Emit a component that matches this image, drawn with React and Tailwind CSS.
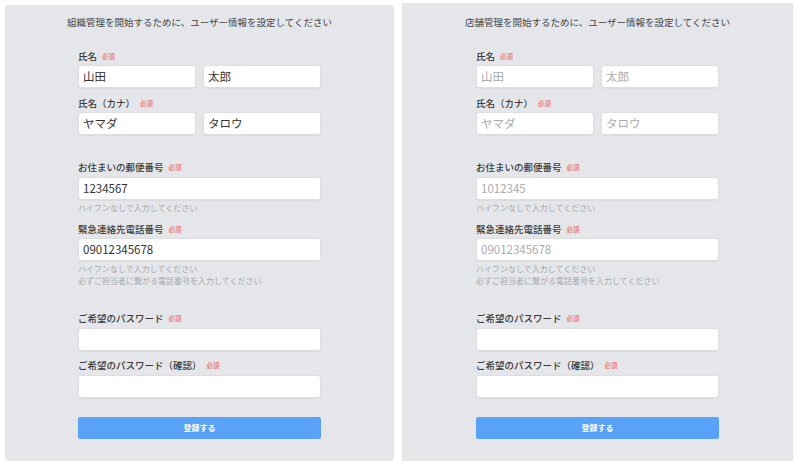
function Label({ text }) {
  return (
    <div className="flex h-[14px] items-center text-[9.5px] font-medium leading-[14px] text-[#3a3a3a]">
      <span>{text}</span>
      <span className="ml-[5px] text-[6.5px] font-bold text-[#ec8585]">必須</span>
    </div>
  );
}

function Field({ value, filled, className = "" }) {
  return (
    <div
      className={`flex h-[23px] items-center rounded-[3px] border border-[#dcdee2] bg-white px-[4px] text-[11.5px] shadow-[0_1px_1px_rgba(0,0,0,0.04)] ${
        filled ? "text-[#333]" : "text-[#a9abb0]"
      } ${className}`}
    >
      {value}
    </div>
  );
}

function Help({ lines }) {
  return (
    <div className="mt-[2px] text-[8px] leading-[12px] text-[#a8aaae]">
      {lines.map((l) => (
        <div key={l}>{l}</div>
      ))}
    </div>
  );
}

function Panel({ title, filled, data, className }) {
  return (
    <div className={`flex flex-col items-center bg-[#e4e6ea] ${className}`}>
      <div className="text-[9.5px] leading-[14px] text-[#444]">{title}</div>

      <div className="mt-[20px] w-[243px]">
        {/* 氏名 */}
        <Label text="氏名" />
        <div className="mt-[2px] grid grid-cols-2 gap-[7px]">
          <Field value={data.sei} filled={filled} />
          <Field value={data.mei} filled={filled} />
        </div>

        <div className="mt-[8px]">
          <Label text="氏名（カナ）" />
        </div>
        <div className="mt-[2px] grid grid-cols-2 gap-[7px]">
          <Field value={data.seiKana} filled={filled} />
          <Field value={data.meiKana} filled={filled} />
        </div>

        {/* 郵便番号 */}
        <div className="mt-[25px]">
          <Label text="お住まいの郵便番号" />
        </div>
        <Field value={data.zip} filled={filled} className="mt-[3px]" />
        <Help lines={["ハイフンなしで入力してください"]} />

        {/* 電話番号 */}
        <div className="mt-[8px]">
          <Label text="緊急連絡先電話番号" />
        </div>
        <Field value={data.tel} filled={filled} className="mt-[2px]" />
        <Help
          lines={[
            "ハイフンなしで入力してください",
            "必ずご担当者に繋がる電話番号を入力してください",
          ]}
        />

        {/* パスワード */}
        <div className="mt-[24px]">
          <Label text="ご希望のパスワード" />
        </div>
        <Field value="" filled className="mt-[3px]" />

        <div className="mt-[7px]">
          <Label text="ご希望のパスワード（確認）" />
        </div>
        <Field value="" filled className="mt-[3px]" />

        <button className="mt-[19px] flex h-[22px] w-full items-center justify-center rounded-[2px] bg-[#58a3f7] text-[8px] font-bold text-white">
          登録する
        </button>
      </div>
    </div>
  );
}

export default function App() {
  return (
    <div
      className="flex h-[466px] w-[800px] items-start gap-[8px] bg-white pl-[5px]"
      style={{ fontFamily: '"Noto Sans CJK JP", "Noto Sans", sans-serif' }}
    >
      <Panel
        className="mt-[5px] h-[456px] w-[389px] rounded-[4px] pt-[10px]"
        title="組織管理を開始するために、ユーザー情報を設定してください"
        filled
        data={{
          sei: "山田",
          mei: "太郎",
          seiKana: "ヤマダ",
          meiKana: "タロウ",
          zip: "1234567",
          tel: "09012345678",
        }}
      />
      <Panel
        className="mt-[3px] h-[458px] w-[391px] pt-[12px]"
        title="店舗管理を開始するために、ユーザー情報を設定してください"
        filled={false}
        data={{
          sei: "山田",
          mei: "太郎",
          seiKana: "ヤマダ",
          meiKana: "タロウ",
          zip: "1012345",
          tel: "09012345678",
        }}
      />
    </div>
  );
}
